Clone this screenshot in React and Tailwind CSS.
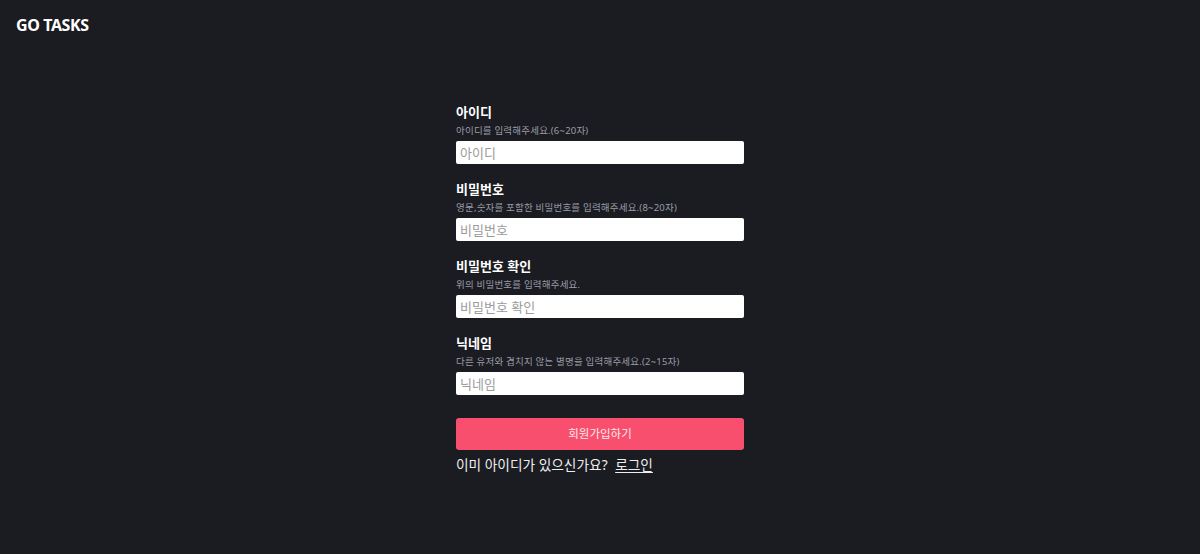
const fields = [
  { label: '아이디', help: '아이디를 입력해주세요.(6~20자)', placeholder: '아이디', type: 'text' },
  { label: '비밀번호', help: '영문,숫자를 포함한 비밀번호를 입력해주세요.(8~20자)', placeholder: '비밀번호', type: 'password' },
  { label: '비밀번호 확인', help: '위의 비밀번호를 입력해주세요.', placeholder: '비밀번호 확인', type: 'password' },
  { label: '닉네임', help: '다른 유저와 겹치지 않는 별명을 입력해주세요.(2~15자)', placeholder: '닉네임', type: 'text' },
];

export default function App() {
  return (
    <div className="min-h-[554px] bg-[#1b1b22] text-white font-['Noto_Sans','Noto_Sans_CJK_KR',sans-serif]">
      <header className="h-[50px] px-4 flex items-center">
        <h1 className="text-[16px] font-bold tracking-tight">GO TASKS</h1>
      </header>

      <main className="w-[288px] mx-auto mt-[53px]">
        <form className="flex flex-col">
          {fields.map((f) => (
            <div key={f.label} className="mb-[16px] flex flex-col">
              <label className="text-[13px] leading-[18px] font-bold">{f.label}</label>
              <p className="mt-[2px] text-[9.5px] leading-[15px] tracking-[0.2px] text-[#9a9ca6]">{f.help}</p>
              <input
                type={f.type}
                placeholder={f.placeholder}
                className="mt-[3px] h-[23px] w-full rounded-[2px] bg-white px-[4px] text-[13px] text-black placeholder:text-[#9b9b9b] outline-none"
              />
            </div>
          ))}

          <button
            type="button"
            className="mt-[7px] h-[32px] w-full rounded-[3px] bg-[#f74f6d] text-[11.5px] text-[#fde8ec]"
          >
            회원가입하기
          </button>
        </form>

        <p className="mt-[5px] text-[13.7px] leading-[20px] text-[#eeeeee]">
          이미 아이디가 있으신가요?{' '}
          <a href="#" className="ml-1 underline underline-offset-2">로그인</a>
        </p>
      </main>
    </div>
  );
}
